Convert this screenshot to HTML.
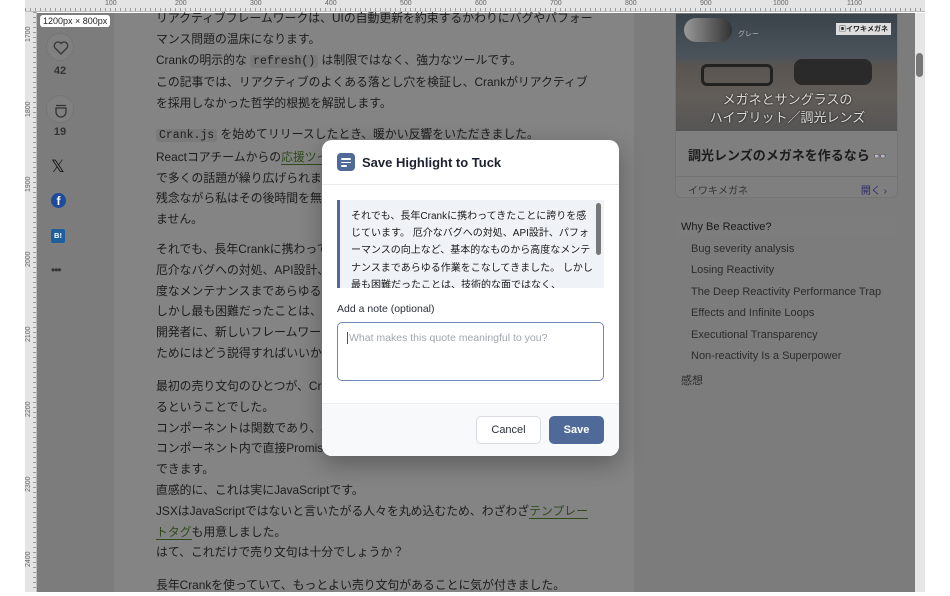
<!DOCTYPE html>
<html><head><meta charset="utf-8">
<style>
*{box-sizing:border-box;margin:0;padding:0}
body{width:950px;height:594px;overflow:hidden;background:#fff;position:relative;font-family:"Liberation Sans","Noto Sans CJK JP",sans-serif}
.rulerT{position:absolute;left:25px;top:0;width:900px;height:12px;background:#e4e4e4;border-bottom:1px solid #bbb;
background-image:repeating-linear-gradient(90deg,#999 0 1px,transparent 1px 5px);background-size:100% 4px;background-repeat:no-repeat;background-position:0 8px}
.rulerT span{position:absolute;top:0;font-size:7px;color:#666}
.rulerL{position:absolute;left:25px;top:12px;width:12px;height:580px;background:#e4e4e4;border-right:1px solid #bbb;
background-image:repeating-linear-gradient(180deg,#999 0 1px,transparent 1px 5px);background-size:4px 100%;background-repeat:no-repeat;background-position:8px 0}
.rulerL span{position:absolute;left:0;font-size:7px;color:#666;transform:rotate(-90deg);transform-origin:left top;width:30px}
.page{position:absolute;left:37px;top:13px;width:878px;height:579px;background:#7b7c7b;overflow:hidden}
.main{position:absolute;left:77px;top:0;width:520px;height:579px;background:#848484}
.txt{position:absolute;left:119px;font-size:11.85px;color:#1c1c1c;white-space:nowrap;line-height:20.8px}
code{font-family:"Liberation Mono",monospace;background:#7a7a7a;border-radius:3px;padding:0 3px;font-size:11.5px}
.lnk{color:#2f4a1c;border-bottom:1.5px solid #2f4a1c}
.badge{position:absolute;left:40px;top:15px;background:#fff;border-radius:3px;font-size:9px;padding:1px 3px;color:#222;z-index:3}
.circ{position:absolute;left:9px;width:28px;height:28px;border-radius:50%;background:#808080;border:1px solid #757575}
.num{position:absolute;left:8px;width:30px;text-align:center;font-size:11px;font-weight:bold;color:#333}
.ad{position:absolute;left:675px;top:13px;width:223px;height:185px;border-radius:0 0 6px 6px;background:#7f7f7f;overflow:hidden;border:1px solid #747474}
.adimg{height:117px;background:linear-gradient(180deg,#3a434a 0,#4a525a 35%,#5a5550 45%,#625d58 70%,#555 100%);position:relative}
.toc{position:absolute;font-size:11px;color:#2c2c2c;white-space:nowrap}
.modal{position:absolute;left:322px;top:140px;width:297px;height:316px;background:#fff;border-radius:10px;overflow:hidden;box-shadow:0 8px 24px rgba(0,0,0,.3)}
.mh{height:45px;border-bottom:1px solid #e8eaee;display:flex;align-items:center;padding-left:15px}
.ico{width:18px;height:18px;border-radius:4px;background:#4f6a98;position:relative;margin-right:7px}
.ico i{position:absolute;left:4px;height:1.5px;background:#fff;border-radius:1px}
.mh b{font-size:13px;color:#1d2230}
.quote{position:absolute;left:15px;top:60px;width:267px;height:88px;background:#eff2f6;border-left:3px solid #4f6a98;overflow:hidden;padding:8px 10px 0 11px;font-size:10px;line-height:17.2px;color:#1a1a1a}
.qsb{position:absolute;right:3px;top:3px;width:5px;height:52px;border-radius:3px;background:#777}
.lab{position:absolute;left:15px;top:163px;font-size:10.5px;color:#2a2f3a}
.ta{position:absolute;left:15px;top:182px;width:267px;height:59px;border:1.5px solid #6f87b5;border-radius:5px;font-size:10.5px;color:#a0a6b0;padding:9px 9px}
.ft{position:absolute;left:0;top:263px;width:297px;height:53px;background:#f8f9fb;border-top:1px solid #eceef2}
.bc{position:absolute;left:154px;top:12px;width:65px;height:28px;border:1px solid #d8dbe0;border-radius:5px;background:#fff;font-size:11px;color:#2a2f3a;text-align:center;line-height:26px}
.bs{position:absolute;left:227px;top:12px;width:55px;height:28px;border-radius:5px;background:#4f6a98;font-size:11px;color:#fff;text-align:center;line-height:28px;font-weight:bold}
</style></head><body>
<div class="rulerT"><span style="left:80px">100</span><span style="left:150px">200</span><span style="left:225px">300</span><span style="left:300px">400</span><span style="left:375px">500</span><span style="left:450px">600</span><span style="left:525px">700</span><span style="left:600px">800</span><span style="left:675px">900</span><span style="left:748px">1000</span><span style="left:822px">1100</span></div>
<div class="rulerL"><span style="top:30px">1700</span><span style="top:105px">1800</span><span style="top:180px">1900</span><span style="top:255px">2000</span><span style="top:330px">2100</span><span style="top:405px">2200</span><span style="top:480px">2300</span><span style="top:555px">2400</span></div>
<div class="badge">1200px × 800px</div>
<div class="page">
 <div class="main"></div>
 <div class="circ" style="top:20px"><svg width="28" height="28" viewBox="0 0 28 28"><path d="M14 20 L8 14 A3.3 3.3 0 0 1 14 9.5 A3.3 3.3 0 0 1 20 14 Z" fill="none" stroke="#333" stroke-width="1.3"/></svg></div>
 <div class="num" style="top:52px">42</div>
 <div class="circ" style="top:82px"><svg width="28" height="28" viewBox="0 0 28 28"><path d="M9 9.5h10M9 12v4a5 5 0 0 0 10 0v-4z" fill="none" stroke="#333" stroke-width="1.3"/></svg></div>
 <div class="num" style="top:113px">19</div>
 <div style="position:absolute;left:14px;top:144px;font-size:17px;color:#111">𝕏</div>
 <div style="position:absolute;left:14px;top:180px;width:15px;height:15px;border-radius:50%;background:#1e4a9c;color:#fff;font-size:12px;font-weight:bold;text-align:center;line-height:17px">f</div>
 <div style="position:absolute;left:14px;top:216px;width:14px;height:14px;border-radius:2px;background:#1d5f9e;color:#fff;font-size:7.5px;font-weight:bold;text-align:center;line-height:14px">B!</div>
 <div style="position:absolute;left:14px;top:250px;font-size:12px;color:#333;letter-spacing:-1px">•••</div>
</div>
<div class="txt" style="top:8px;left:156px">リアクティブフレームワークは、UIの自動更新を約束するかわりにバグやパフォー<br>マンス問題の温床になります。<br>Crankの明示的な <code>refresh()</code> は制限ではなく、強力なツールです。<br>この記事では、リアクティブのよくある落とし穴を検証し、Crankがリアクティブ<br>を採用しなかった哲学的根拠を解説します。</div>
<div class="txt" style="top:124px;left:156px"><code>Crank.js</code> を始めてリリースしたとき、暖かい反響をいただきました。<br>Reactコアチームからの<span class="lnk">応援ツイート</span>もあり、コミュニティ<br>で多くの話題が繰り広げられました。<br>残念ながら私はその後時間を無駄にしてしまったかもしれ<br>ません。</div>
<div class="txt" style="top:239px;left:156px">それでも、長年Crankに携わってきたことに誇りを感じています。<br>厄介なバグへの対処、API設計、パフォーマンスの向上など、基本的<br>度なメンテナンスまであらゆる作業をこなしてきました。<br>しかし最も困難だったことは、技術的な面ではなく、<br>開発者に、新しいフレームワークを試してもらう<br>ためにはどう説得すればいいか、ということでした。</div>
<div class="txt" style="top:376px;left:156px">最初の売り文句のひとつが、Crankのコンポーネントはジェネレーター<br>るということでした。<br>コンポーネントは関数であり、async関数にもできます。<br>コンポーネント内で直接Promiseをawaitして<br>できます。<br>直感的に、これは実にJavaScriptです。<br>JSXはJavaScriptではないと言いたがる人々を丸め込むため、わざわざ<span class="lnk">テンプレー</span><br><span class="lnk">トタグ</span>も用意しました。<br>はて、これだけで売り文句は十分でしょうか？</div>
<div class="txt" style="top:575px;left:156px">長年Crankを使っていて、もっとよい売り文句があることに気が付きました。</div>

<div class="ad">
 <div class="adimg">
  <div style="position:absolute;left:8px;top:4px;width:48px;height:24px;border-radius:12px;background:linear-gradient(90deg,#999,#333)"></div>
  <div style="position:absolute;left:62px;top:15px;font-size:7px;color:#bbb">グレー</div>
  <div style="position:absolute;right:6px;top:9px;background:#ddd;font-size:7px;font-weight:bold;padding:1px 3px;color:#222">▣イワキメガネ</div>
  <div style="position:absolute;left:25px;top:50px;width:72px;height:22px;border:3px solid #222;border-radius:6px"></div>
  <div style="position:absolute;left:118px;top:45px;width:78px;height:26px;background:#2a2a2a;border-radius:8px"></div>
  <div style="position:absolute;left:0;top:77px;width:223px;text-align:center;color:#ddd;font-size:13px;line-height:18px;text-shadow:0 0 2px #000">メガネとサングラスの<br>ハイブリット／調光レンズ</div>
 </div>
 <div style="padding:14px 12px;font-size:13px;font-weight:bold;color:#1c1c1c;white-space:nowrap">調光レンズのメガネを作るなら <span style="font-size:11px">👓</span></div>
 <div style="position:absolute;left:0;top:162px;width:223px;border-top:1px solid #747474;padding:5px 12px;font-size:10px;color:#333">イワキメガネ<span style="float:right;color:#2b2b6a">開く ›</span></div>
</div>
<div style="position:absolute;left:675px;top:217px;width:222px;height:20px;background:#7d7d7d"></div>
<div class="toc" style="left:681px;top:221px;color:#1a1a1a">Why Be Reactive?</div>
<div class="toc" style="left:691px;top:243px">Bug severity analysis</div>
<div class="toc" style="left:691px;top:264px">Losing Reactivity</div>
<div class="toc" style="left:691px;top:286px">The Deep Reactivity Performance Trap</div>
<div class="toc" style="left:691px;top:307px">Effects and Infinite Loops</div>
<div class="toc" style="left:691px;top:329px">Executional Transparency</div>
<div class="toc" style="left:691px;top:350px">Non-reactivity Is a Superpower</div>
<div class="toc" style="left:681px;top:372px">感想</div>

<div style="position:absolute;left:915px;top:13px;width:10px;height:579px;background:#e6e6e6"></div>
<div style="position:absolute;left:916px;top:53px;width:7px;height:24px;border-radius:4px;background:#777"></div>

<div class="modal">
 <div class="mh"><div class="ico"><i style="top:5px;width:10px"></i><i style="top:8.5px;width:10px"></i><i style="top:12px;width:6px"></i></div><b>Save Highlight to Tuck</b></div>
 <div class="quote">それでも、長年Crankに携わってきたことに誇りを感じています。 厄介なバグへの対処、API設計、パフォーマンスの向上など、基本的なものから高度なメンテナンスまであらゆる作業をこなしてきました。 しかし最も困難だったことは、技術的な面ではなく、<div class="qsb"></div></div>
 <div class="lab">Add a note (optional)</div>
 <div class="ta"><span style="border-left:1px solid #2a4fa0;padding-left:1px"></span>What makes this quote meaningful to you?</div>
 <div class="ft"><div class="bc">Cancel</div><div class="bs">Save</div></div>
</div>
</body></html>
